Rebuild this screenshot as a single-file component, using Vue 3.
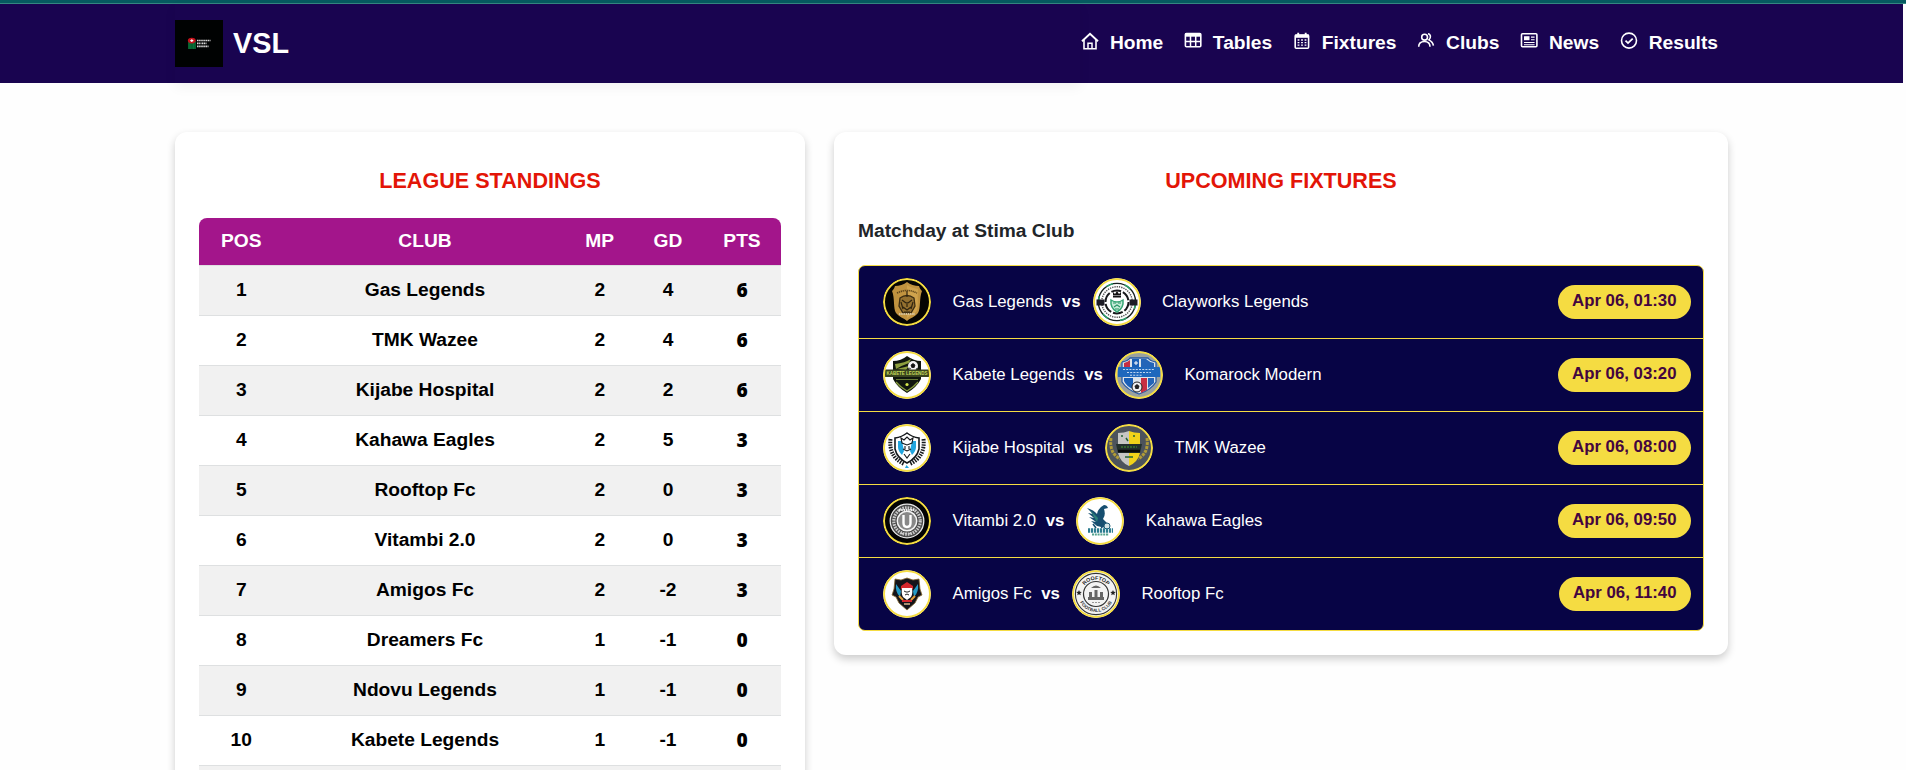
<script setup>
const nav = ['Home', 'Tables', 'Fixtures', 'Clubs', 'News', 'Results']

const standings = [
  ['Gas Legends', 2, 4, 6],
  ['TMK Wazee', 2, 4, 6],
  ['Kijabe Hospital', 2, 2, 6],
  ['Kahawa Eagles', 2, 5, 3],
  ['Rooftop Fc', 2, 0, 3],
  ['Vitambi 2.0', 2, 0, 3],
  ['Amigos Fc', 2, -2, 3],
  ['Dreamers Fc', 1, -1, 0],
  ['Ndovu Legends', 1, -1, 0],
  ['Kabete Legends', 1, -1, 0],
]

const fixtures = [
  { home: 'Gas Legends', away: 'Clayworks Legends', time: 'Apr 06, 01:30' },
  { home: 'Kabete Legends', away: 'Komarock Modern', time: 'Apr 06, 03:20' },
  { home: 'Kijabe Hospital', away: 'TMK Wazee', time: 'Apr 06, 08:00' },
  { home: 'Vitambi 2.0', away: 'Kahawa Eagles', time: 'Apr 06, 09:50' },
  { home: 'Amigos Fc', away: 'Rooftop Fc', time: 'Apr 06, 11:40' },
]
</script>

<template>
  <div class="page">
    <div class="strip"></div>
    <header class="bar">
      <div class="bar-inner">
        <a class="brand">
          <svg class="brand-logo" viewBox="0 0 48 47">
            <rect width="48" height="47" fill="#000202" />
            <path d="M13 21h8v8h-8z" fill="#06602f" />
            <path d="M15 22v7M18.500 22v7" stroke="#0a7a3c" stroke-width=".7" />
            <ellipse cx="16.800" cy="20.600" rx="3.900" ry="2.800" fill="#c3121b" />
            <path d="M15.300 20.600h3M16.800 19.200v2.800" stroke="#fff" stroke-width="1.100" />
            <path d="M22 20.500h13.500M22 23.300h3.500m1 0h5M22 26.300h11.500" stroke="#d8d8d8" stroke-width="1.700" stroke-dasharray="1.600 .5" />
          </svg>
          <span>VSL</span>
        </a>
        <nav class="nav">
          <a v-for="n in nav" :key="n" class="nav-item" :class="'nav-' + n.toLowerCase()">
            <svg class="nav-icon" viewBox="0 0 20 20" fill="none" stroke="#fff" stroke-width="1.600">
              <template v-if="n === 'Home'">
                <path d="M2 10.300 10 2.800l8 7.500" stroke-width="1.900" />
                <path d="M4 9v8.700h12V9" />
                <path d="M8 17.500v-5.200h4v5.200" stroke-width="1.500" />
              </template>
              <template v-else-if="n === 'Tables'">
                <rect x="2.400" y="2.600" width="15.400" height="13.200" rx="1" />
                <path d="M2 4h16" stroke-width="3.400" />
                <path d="M7.500 4v12M12.700 4v12M2 10.500h16" stroke-width="1.500" />
              </template>
              <template v-else-if="n === 'Fixtures'">
                <rect x="3.200" y="4" width="13.400" height="13.200" rx="1" />
                <path d="M3 5.200h14" stroke-width="3.200" />
                <path d="M6.200 1.800V5M13.700 1.800V5" stroke-width="1.900" />
                <path d="M5.600 9h9M5.600 11.600h9M5.600 14.200h9" stroke-width="1.300" stroke-dasharray="1.800 1.700" />
              </template>
              <template v-else-if="n === 'Clubs'">
                <circle cx="8.600" cy="6.200" r="2.900" />
                <path d="M2.700 15.800c0-3.500 2.200-5.300 5.700-5.300s5.600 1.900 5.600 5.300" />
                <path d="M12 2.700c2.800.3 3.300 4.300.9 6.200 2.700 1.300 4 3 4.500 5.800" />
              </template>
              <template v-else-if="n === 'News'">
                <rect x="2.500" y="2.800" width="15.400" height="13" rx="1" />
                <path d="M5 5.200h5.500v4H5z" fill="#fff" stroke="none" />
                <path d="M12 6.100h3.600M12 8.700h3.600M5 11.500h10.600M5 13.700h10.600" stroke-width="1.100" />
              </template>
              <template v-else>
                <circle cx="10" cy="9.600" r="7.500" />
                <path d="m6.500 9.700 2.500 2.400 4.700-4.500" stroke-width="1.800" />
              </template>
            </svg>
            <span>{{ n }}</span>
          </a>
        </nav>
      </div>
    </header>

    <main class="content">
      <section class="card standings-card">
        <h2>LEAGUE STANDINGS</h2>
        <div class="table">
          <div class="row head">
            <span>POS</span><span>CLUB</span><span>MP</span><span>GD</span><span>PTS</span>
          </div>
          <div v-for="(s, i) in standings" :key="s[0]" class="row">
            <span>{{ i + 1 }}</span><span>{{ s[0] }}</span><span>{{ s[1] }}</span><span>{{ s[2] }}</span>
            <span class="pts">{{ s[3] }}</span>
          </div>
          <div class="row"></div>
        </div>
      </section>

      <section class="card fixtures-card">
        <h2>UPCOMING FIXTURES</h2>
        <h3>Matchday at Stima Club</h3>
        <div class="list">
          <div v-for="f in fixtures" :key="f.time" class="match">
            <template v-for="(team, k) in [f.home, f.away]" :key="team">
              <span v-if="k === 1" class="vs">vs</span>
              <svg class="crest" viewBox="0 0 48 48">
                <template v-if="team === 'Gas Legends'">
                  <circle cx="24" cy="24" r="24" fill="#060502" />
                  <path d="M24 4c3 2.500 8 4 12 4 1 3 2 4 3 5-3 7-1 17-4 22-3 4-8 5-11 8-3-3-8-4-11-8-3-5-1-15-4-22 1-1 2-2 3-5 4 0 9-1.500 12-4z" fill="#c1933f" />
                  <path d="M24 7c4 3 8 3 11 4-1 9 1 17-2 23l-9 6z" fill="#d9ac54" opacity=".65" />
                  <path d="M14 15q10-5 20 0" fill="none" stroke="#5f451a" stroke-width="1.600" stroke-dasharray="1.300 .7" />
                  <path d="M17 20q7-5 14 0l1 8-4 7h-8l-4-7z" fill="#94702f" stroke="#3b2c12" stroke-width="1.300" />
                  <path d="m19 22 4 3m6-3-4 3m-5 4 4 3 4-3m-4-5v5m-6-5 2 7m10-7-2 7M21 34h6M24 13v6" fill="none" stroke="#2f2410" stroke-width="1.200" />
                  <path d="M16 36h16" stroke="#d8c49b" stroke-width="2" stroke-dasharray="1.500 .7" />
                </template>
                <template v-else-if="team === 'Clayworks Legends'">
                  <circle cx="24" cy="24" r="24" fill="#fff" />
                  <circle cx="24" cy="24" r="18.600" fill="none" stroke="#17211f" stroke-width="1.400" />
                  <circle cx="24" cy="24" r="18.600" fill="none" stroke="#2e9f6c" stroke-width="1.600" stroke-dasharray="7 12" />
                  <circle cx="24" cy="24" r="15.300" fill="none" stroke="#555" stroke-width="1.500" stroke-dasharray="1.300 1" />
                  <circle cx="24" cy="24" r="11.500" fill="none" stroke="#17181b" stroke-width="2" stroke-dasharray="10 2" />
                  <path d="M3.500 21.500h8v6h-8zM36.500 21.500h8v6h-8z" fill="#1c1b25" />
                  <path d="M20 17.500h8v2h-8zM20 14l2 2 2-3 2 3 2-2v3h-8z" fill="#111" />
                  <path d="M18 22q-1 8 6 12 7-4 6-12-3 2-6 2t-6-2z" fill="#c5ebd8" stroke="#36a675" stroke-width="1.500" />
                  <path d="M20 25h3m2 0h3m-7 4 3-2 3 2m-5 2h4" fill="none" stroke="#279565" stroke-width="1.100" />
                </template>
                <template v-else-if="team === 'Kabete Legends'">
                  <circle cx="24" cy="24" r="24" fill="#fff" />
                  <path d="M10 10q8 0 14-5 7 5 14 5v18q-4 8-14 14-10-6-14-14z" fill="#10160e" />
                  <path d="M12 13q10-1 16-5l-2 4q-6 2-13 6zM14 18q8-2 12-3l-3 4z" fill="#8d9f3e" />
                  <path d="M13 31q4 5 11 9 7-4 11-9" fill="none" stroke="#84993b" stroke-width="1.300" />
                  <circle cx="30" cy="15" r="5" fill="#f4f4f4" />
                  <path d="m30 12.500 2 1.500-.8 2.500h-2.400L28 14zM26 17l2 1m5 1 1-2" fill="#111" stroke="#111" stroke-width=".8" />
                  <path d="M2 18.500h44v7.500H2z" fill="#39431f" />
                  <text x="24" y="24.300" text-anchor="middle" textLength="41" lengthAdjust="spacingAndGlyphs" font-size="5.600" font-weight="700" fill="#c5d95b">KABETE LEGENDS</text>
                  <path d="M13 28.500h22" stroke="#687a36" stroke-width="1" />
                  <circle cx="24" cy="33.500" r="1.600" fill="#d5e84b" />
                </template>
                <template v-else-if="team === 'Komarock Modern'">
                  <circle cx="24" cy="24" r="24" fill="#9aa19f" />
                  <path d="M7 11q6-1 8-4h18q2 3 8 4v20q-5 8-17 12Q12 39 7 31z" fill="#dce4ea" stroke="#2459a6" stroke-width="1.300" />
                  <path d="M17 8h7v16h-7zM9 27h9v11q-7-3-9-8z" fill="#185fb7" />
                  <path d="M9 12q4-1 6-3v12H9zM26 27h6v12l-6 3z" fill="#c72f43" />
                  <path d="M26 8h5q3 3 8 4v10H26zM33 27h6v5l-6 5z" fill="#2365b8" />
                  <path d="M3 16h42v10H3z" fill="#1e68bd" />
                  <path d="M8 18.500h32M12 21.500h24M15 24.200h12" stroke="#c0d6f0" stroke-width="1.100" stroke-dasharray="2 1.200" />
                  <path d="M21 10v4M19 12h4" stroke="#fff" />
                  <circle cx="22" cy="36" r="5" fill="#f2f2f2" stroke="#222" />
                  <path d="m22 33 2.500 2-1 3h-3l-1-3z" fill="#222" />
                </template>
                <template v-else-if="team === 'Kijabe Hospital'">
                  <circle cx="24" cy="24" r="24" fill="#fff" />
                  <path d="M7.500 15q-2 18 14 25M40.500 15q2 18-14 25" fill="none" stroke="#16191c" stroke-width="4" stroke-dasharray="1.500 1.100" />
                  <path d="M12 14q7-1 12-5 5 4 12 5v11q-2 9-12 14-10-5-12-14z" fill="#fff" stroke="#15191c" stroke-width="1.600" />
                  <path d="M15 17h4l2 10-2 4q-4-4-4-8zM33 17h-4l-2 10 2 4q4-4 4-8z" fill="#22a6df" />
                  <path d="m18 14 3 2 3-3 3 3 3-2-1 5-5 2-5-2zM20 25l4 2 4-2m-7 5 3 4 3-4M22 22v3m4-3v3" fill="none" stroke="#15191c" stroke-width="1.100" />
                  <path d="m23.500 41 2.500 3h-4z" fill="#22a6df" />
                </template>
                <template v-else-if="team === 'TMK Wazee'">
                  <circle cx="24" cy="24" r="24" fill="#4c535c" />
                  <path d="M6 14q-2 15 9 21M42 14q2 15-9 21" fill="none" stroke="#b19b36" stroke-width="3" stroke-dasharray="3 1" />
                  <path d="M13 9q6 0 11-2v35q-9-4-11-13z" fill="#c6c6c4" />
                  <path d="M24 7q5 2 11 2v20q-2 9-11 13z" fill="#f0d21a" />
                  <path d="M11 20h26l-2 9H13z" fill="#222f2c" />
                  <path d="M16 23h16" stroke="#39772e" stroke-width="1.500" stroke-dasharray="2 1" />
                  <path d="M13 27h22" stroke="#080a0a" stroke-width="2.500" />
                  <path d="M16 12h2m10 0h2M21 14l2 3M20 33h8" stroke="#236336" stroke-width="1.500" />
                </template>
                <template v-else-if="team === 'Vitambi 2.0'">
                  <circle cx="24" cy="24" r="24" fill="#030303" />
                  <circle cx="24" cy="24" r="16.800" fill="#4b4b4b" stroke="#e9e9e9" stroke-width="1.300" />
                  <circle cx="24" cy="24" r="13.200" fill="none" stroke="#c9c9c9" stroke-width="3.200" stroke-dasharray="1.600 1" />
                  <circle cx="24" cy="24" r="9.700" fill="#888" stroke="#f3f3f3" stroke-width="1.500" />
                  <path d="M20.500 18v8q0 4 3.500 4t3.500-4v-8" fill="none" stroke="#fff" stroke-width="2.400" />
                  <path d="M16 13h16" stroke="#eee" stroke-width="2" stroke-dasharray="1.500 .8" />
                  <path d="M18 36.500h12" stroke="#ccc" stroke-width="1.300" stroke-dasharray="2 2" />
                </template>
                <template v-else-if="team === 'Kahawa Eagles'">
                  <circle cx="24" cy="24" r="24" fill="#fff" />
                  <path d="M11 11q7 2 10 6 1-6 7-9 3 0 4 3l-4 1q2 6-1 10l5 5-2 4-9-2-6-5 5 1-7-5 5 1-6-5 5 1z" fill="#174f70" />
                  <path d="m14 13 8 8-1 4z" fill="#2d8279" />
                  <path d="m17 27 3 4m5-3 1 3" stroke="#174f70" stroke-width="1.600" />
                  <circle cx="31" cy="29" r="3" fill="#d5e4e6" stroke="#205d77" />
                  <path d="M12 33.500h25" stroke="#2c7c90" stroke-width="4.500" stroke-dasharray="2.200 .8" />
                  <path d="M16 37.500h17" stroke="#55a38e" stroke-width="2.200" stroke-dasharray="2 .8" />
                </template>
                <template v-else-if="team === 'Amigos Fc'">
                  <circle cx="24" cy="24" r="24" fill="#fff" />
                  <path d="m12 9 6 1 6-2 6 2 6-1 1 10 2 6-4 2-3 6-8 7-8-7-3-6-4-2 2-6z" fill="#14141a" stroke="#866a35" stroke-width=".8" />
                  <path d="m13 14 5 7-1 6q-5-5-4-13zM35 14l-5 7 1 6q5-5 4-13z" fill="#249bc6" />
                  <path d="m18 16 6-4 6 4v3H18z" fill="#d5272c" />
                  <path d="M19 18h10q1 6-1 9l-4 3-4-3q-2-3-1-9z" fill="#fff" />
                  <path d="m21 21 2 1m4-1-2 1m-3 3 2-1 2 1M24 21v2" stroke="#222" fill="none" />
                  <path d="m16 26 4 4M32 26l-4 4" stroke="#e5a23b" stroke-width="2" />
                  <path d="M19 31h10" stroke="#d5272c" stroke-width="2.200" />
                  <path d="M21 34h6" stroke="#d8b98a" stroke-width="1.500" />
                </template>
                <template v-else>
                  <circle cx="24" cy="24" r="24" fill="#f3f3f3" />
                  <circle cx="24" cy="24" r="20.600" fill="none" stroke="#333" stroke-width="1.100" />
                  <circle cx="24" cy="24" r="12.500" fill="none" stroke="#333" stroke-width="1.200" />
                  <path id="rt-top" d="M9.800 24a14.200 14.200 0 0 1 28.400 0" fill="none" />
                  <path id="rt-bottom" d="M6 24a18 18 0 0 0 36 0" fill="none" />
                  <text font-size="5.300" font-weight="700" fill="#222"><textPath href="#rt-top" startOffset="50%" text-anchor="middle">ROOFTOP</textPath></text>
                  <text font-size="4.600" font-weight="700" fill="#333"><textPath href="#rt-bottom" startOffset="50%" text-anchor="middle">FOOTBALL CLUB</textPath></text>
                  <path d="m7 20 .8 1.800 2 .2-1.500 1.300.4 2L7 24.200l-1.700 1.100.4-2L4.200 22l2-.2zM41 20l.8 1.800 2 .2-1.500 1.300.4 2-1.700-1.100-1.700 1.100.4-2-1.500-1.300 2-.2z" fill="#222" />
                  <path d="M16 27h16v3H16zM17 22h3v5h-3zM22.500 20h3v7h-3zM28 22h3v5h-3zM19 18q5-5 10 0z" fill="#666" />
                  <path d="M20 32.500h8" stroke="#999" stroke-dasharray="2 1" />
                </template>
                <circle cx="24" cy="24" r="23" fill="none" stroke="#f5dc42" stroke-width="2" />
              </svg>
              <span class="team">{{ team }}</span>
            </template>
            <span class="time">{{ f.time }}</span>
          </div>
        </div>
      </section>
    </main>
  </div>
</template>

<style>
html,
body {
  margin: 0;
  height: 100%;
  overflow: hidden;
  background: #fefefe;
}
</style>

<style scoped>
.page {
  box-sizing: border-box;
  height: 770px;
  overflow: hidden;
  background: #fefefe;
  font-family: "Liberation Sans", Arial, sans-serif;
}
.strip {
  height: 3px;
  background: #065b60;
  border-bottom: 1px solid #348781;
}
.bar {
  margin-right: 3px;
  height: 79px;
  background: #190450;
}
.bar-inner {
  box-sizing: border-box;
  height: 100%;
  padding-left: 175px;
  padding-right: 185px;
  display: flex;
}
.brand {
  flex: 1;
  display: flex;
  align-items: center;
  gap: 10px;
  color: #fff;
  font-size: 28.800px;
  font-weight: 700;
  line-height: 1;
  box-shadow: 0 4px 12px rgba(0, 0, 0, 0.05);
}
.brand-logo {
  width: 48px;
  height: 47px;
}
.brand span {
  margin-top: -1px;
}
.nav {
  display: flex;
  align-items: center;
  gap: 19.600px;
}
.nav-item {
  display: flex;
  align-items: center;
  gap: 10px;
  color: #fff;
  font-size: 19.200px;
  line-height: 22px;
  font-weight: 700;
  margin-top: -2px;
}
.nav-icon {
  width: 20px;
  height: 20px;
  margin-top: -3px;
}
.content {
  display: flex;
  align-items: flex-start;
  gap: 29px;
  padding: 49px 178px 0 175px;
}
.card {
  box-sizing: border-box;
  background: #fff;
  border-radius: 12px;
  box-shadow: 0 4px 8px rgba(0, 0, 0, 0.2);
  padding: 24px;
}
.standings-card {
  width: 630px;
}
.fixtures-card {
  width: 894px;
  height: 523px;
}
h2 {
  margin: 12px 0 24px;
  font-size: 21.600px;
  line-height: 26px;
  font-weight: 700;
  text-align: center;
  color: #e31507;
}
.table {
  border-radius: 8px 8px 0 0;
  overflow: hidden;
}
.row {
  box-sizing: border-box;
  height: 50px;
  padding-bottom: 2px;
  display: grid;
  grid-template-columns: 84.500px 283px 66.500px 70px 78px;
  align-items: center;
  text-align: center;
  border-top: 1px solid #dee0e1;
  font-size: 19.200px;
  line-height: 22px;
  font-weight: 700;
  color: #000;
}
.row:nth-child(even) {
  background: #f1f1f1;
}
.row.head {
  height: 47px;
  border-top: 0;
  background: #a3158b;
  color: #fff;
}
.pts {
  font-family: "Open Sans", "Liberation Sans", sans-serif;
  font-weight: 800;
}
h3 {
  margin: 0 0 21px;
  font-size: 19.200px;
  line-height: 26px;
  font-weight: 700;
  color: #212529;
}
.list {
  box-sizing: border-box;
  height: 366px;
  border: 1px solid #f5dc42;
  border-radius: 7px;
  overflow: hidden;
  background: #070445;
}
.match {
  box-sizing: border-box;
  height: 73px;
  display: flex;
  align-items: center;
  padding: 0 12px 0 24px;
  border-bottom: 1px solid #f5dc42;
  color: #fff;
  font-size: 16.800px;
  line-height: 20px;
}
.match:last-child {
  height: 72px;
  border-bottom: 0;
}
.crest {
  width: 48px;
  height: 48px;
  border-radius: 50%;
}
.team {
  margin-left: 21.500px;
}
.vs {
  font-weight: 700;
  margin: 0 12px 0 9.500px;
}
.time {
  box-sizing: border-box;
  height: 34px;
  margin-left: auto;
  padding: 6px 14.500px 8px 14px;
  border-radius: 17px;
  background: #f5dc42;
  color: #43053f;
  font-weight: 700;
}
</style>
